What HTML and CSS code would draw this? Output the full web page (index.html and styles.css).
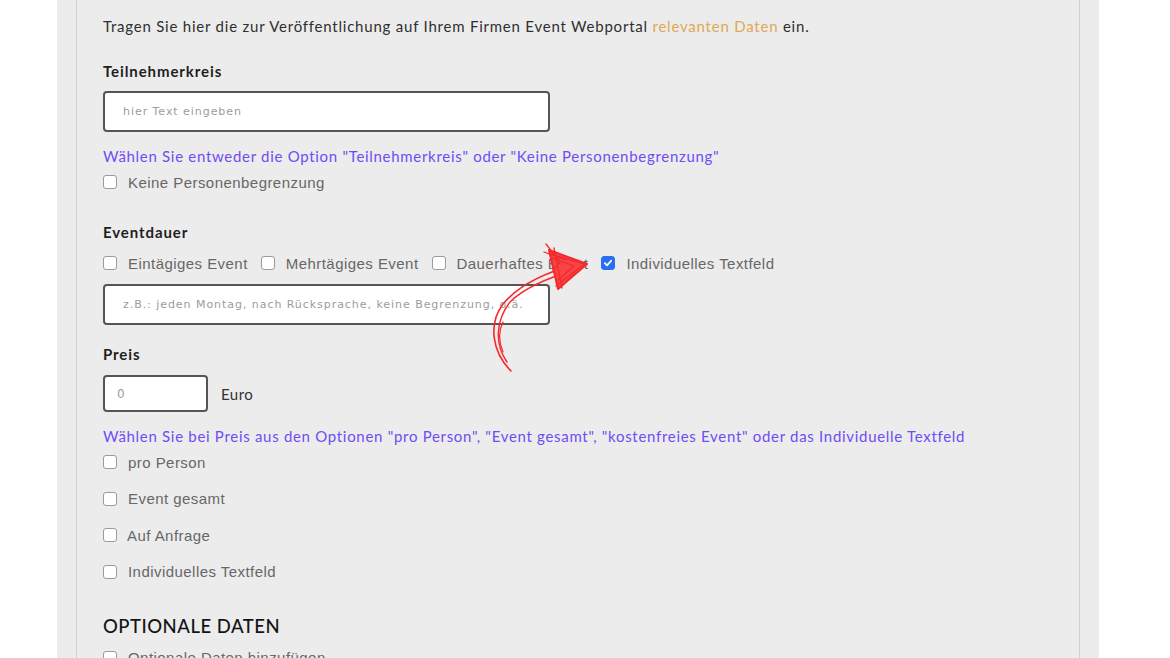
FILE: index.html
```html
<!DOCTYPE html>
<html lang="de">
<head>
<meta charset="utf-8">
<title>Event Daten</title>
<link rel="stylesheet" href="styles.css">
</head>
<body>
<div class="panel">
  <div class="inner">
    <p class="intro">Tragen Sie hier die zur Veröffentlichung auf Ihrem Firmen Event Webportal <span class="accent">relevanten Daten</span> ein.</p>

    <div class="label l-teil">Teilnehmerkreis</div>
    <input class="field wide f1" type="text" placeholder="hier Text eingeben">
    <div class="hint h1">Wählen Sie entweder die Option "Teilnehmerkreis" oder "Keine Personenbegrenzung"</div>
    <div class="check c-first"><span class="box"></span><span class="ctext">Keine Personenbegrenzung</span></div>

    <div class="label l-dauer">Eventdauer</div>
    <div class="row">
      <div class="check"><span class="box"></span><span class="ctext">Eintägiges Event</span></div>
      <div class="check"><span class="box"></span><span class="ctext">Mehrtägiges Event</span></div>
      <div class="check"><span class="box"></span><span class="ctext">Dauerhaftes Event</span></div>
      <div class="check"><span class="box checked"><svg viewBox="0 0 14 14" width="14" height="14"><path d="M3.3 7.2 L5.9 9.8 L10.8 4.3" fill="none" stroke="#fff" stroke-width="2" stroke-linecap="round" stroke-linejoin="round"/></svg></span><span class="ctext">Individuelles Textfeld</span></div>
    </div>
    <input class="field wide f2" type="text" placeholder="z.B.: jeden Montag, nach Rücksprache, keine Begrenzung, o.ä.">

    <div class="label l-preis">Preis</div>
    <div class="price-row">
      <input class="field small" type="text" placeholder="0">
      <span class="euro">Euro</span>
    </div>
    <div class="hint h2">Wählen Sie bei Preis aus den Optionen "pro Person", "Event gesamt", "kostenfreies Event" oder das Individuelle Textfeld</div>
    <div class="list">
      <div class="check"><span class="box"></span><span class="ctext">pro Person</span></div>
      <div class="check"><span class="box"></span><span class="ctext">Event gesamt</span></div>
      <div class="check"><span class="box"></span><span class="ctext tight">Auf Anfrage</span></div>
      <div class="check"><span class="box"></span><span class="ctext">Individuelles Textfeld</span></div>
    </div>

    <h2 class="section">OPTIONALE DATEN</h2>
    <div class="check c-last"><span class="box"></span><span class="ctext">Optionale Daten hinzufügen</span></div>
  </div>

  <svg class="arrow" viewBox="0 0 140 140" width="140" height="140">
    <g fill="none" stroke="#f5292b" stroke-linecap="round" stroke-linejoin="round">
      <path d="M41 131 C 22 112, 18 84, 33 64 C 48 46, 74 33, 104 25" stroke-width="1.6"/>
      <path d="M37 122 C 24 104, 26 80, 40 62 C 55 47, 80 37, 108 29" stroke-width="1.4"/>
      <path d="M33 112 C 28 100, 29 90, 33 82" stroke-width="1.2"/>
    </g>
    <path d="M79 10 L117 24 L88 49 Z" fill="#f74547" stroke="#f5292b" stroke-width="2" stroke-linejoin="round"/>
    <g fill="none" stroke="#f5292b" stroke-width="1.3" stroke-linecap="round">
      <path d="M76 4 L90 22 L83 30"/>
      <path d="M80 14 L114 24 L86 46"/>
      <path d="M84 8 L92 48"/>
      <path d="M74 12 L96 20"/>
      <path d="M82 18 L104 26 L88 40"/>
    </g>
  </svg>
</div>
</body>
</html>
```

FILE: styles.css
```css
html, body {
  margin: 0;
  padding: 0;
  background: #ffffff;
}

body {
  height: 658px;
  overflow: hidden;
}

.panel {
  position: relative;
  margin-left: 57px;
  width: 1042px;
  height: 658px;
  background: #ececec;
}

.inner {
  margin-left: 19px;
  width: 1004px;
  height: 658px;
  box-sizing: border-box;
  border-left: 1px solid #cfcfcf;
  border-right: 1px solid #cfcfcf;
  padding: 16px 0 0 26px;
  font-family: "Lato", "Liberation Sans", sans-serif;
}

.intro {
  margin: 0;
  font-size: 15px;
  line-height: 20px;
  letter-spacing: 0.78px;
  color: #2f2f2f;
}

.accent {
  color: #e0a857;
}

.label {
  font-size: 15px;
  font-weight: 700;
  line-height: 20px;
  letter-spacing: 0.9px;
  color: #1f1f1f;
}

.l-teil { margin-top: 25px; }
.l-dauer { margin-top: 30px; }
.l-preis { margin-top: 19px; }

.field {
  display: block;
  box-sizing: border-box;
  background: #ffffff;
  border: 2px solid #555555;
  border-radius: 4px;
  padding: 0 0 0 18px;
  font-family: "DejaVu Sans", sans-serif;
  font-size: 11px;
  color: #555;
  outline: none;
}

.field::placeholder {
  color: #9c9c9c;
  letter-spacing: 0.95px;
}

.wide {
  width: 447px;
  height: 41px;
}

.f1 { margin-top: 10px; }
.f2 { margin-top: 11px; }

.small {
  width: 105px;
  height: 37px;
  padding-left: 12px;
  font-size: 12px;
}

.price-row {
  display: flex;
  align-items: center;
  gap: 13px;
  margin-top: 11px;
}

.euro {
  font-size: 15px;
  letter-spacing: 0.5px;
  color: #333;
}

.hint {
  font-size: 15px;
  line-height: 20px;
  letter-spacing: 0.7px;
  color: #6f4cf5;
}

.h1 { margin-top: 14px; }
.h2 { margin-top: 14px; }

.check {
  display: flex;
  align-items: center;
  height: 20px;
}

.c-first { margin-top: 6px; }

.box {
  display: inline-flex;
  align-items: center;
  justify-content: center;
  width: 14px;
  height: 14px;
  box-sizing: border-box;
  border: 1.5px solid #9b9b9b;
  border-radius: 3px;
  background: #ffffff;
  flex: none;
}

.box.checked {
  background: #2c6ef0;
  border-color: #2c6ef0;
}

.box.checked svg {
  display: block;
}

.ctext {
  margin-left: 11px;
  font-family: "Liberation Sans", "Roboto", sans-serif;
  font-size: 15px;
  color: #676767;
  letter-spacing: 0.45px;
}

.ctext.tight {
  margin-left: 10px;
}

.row {
  display: flex;
  gap: 13px;
  margin-top: 11px;
}

.list {
  display: flex;
  flex-direction: column;
  gap: 16.5px;
  margin-top: 6px;
}

.section {
  margin: 32px 0 0 0;
  font-family: "Lato", "Liberation Sans", sans-serif;
  font-size: 18.5px;
  font-weight: 500;
  letter-spacing: 0.5px;
  line-height: 24px;
  color: #141414;
}

.c-last { margin-top: 10px; }

.arrow {
  position: absolute;
  left: 413px;
  top: 240px;
}
```
